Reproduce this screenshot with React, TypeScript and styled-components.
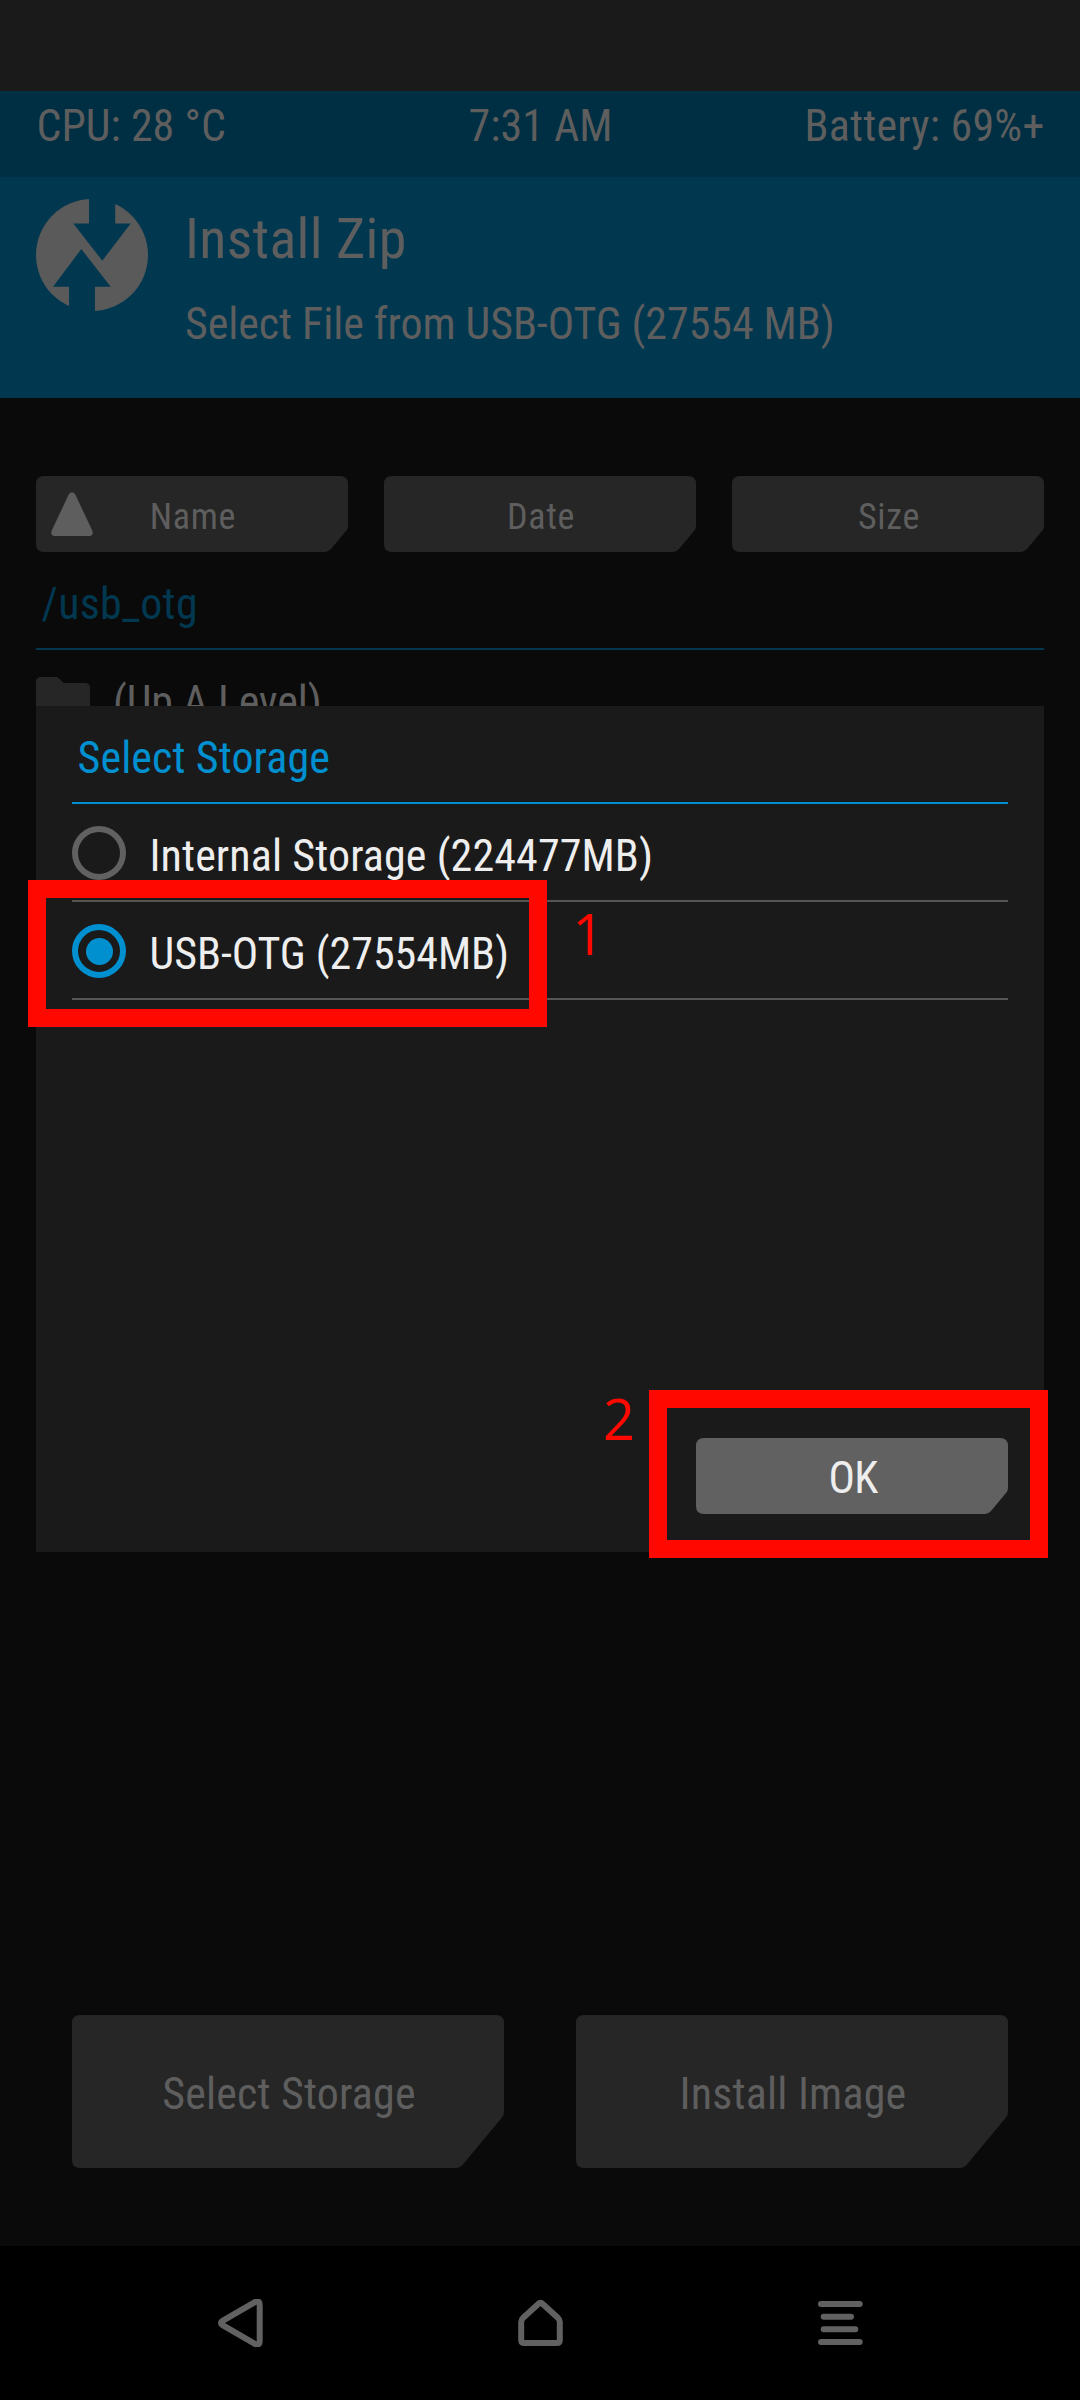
import React from "react";
import styled, { createGlobalStyle } from "styled-components";

const color = {
  screen: "#0a0a0a",
  notch: "#1a1a1a",
  status: "#002e42",
  header: "#013850",
  muted: "#5e5e5e",
  button: "#262626",
  dialog: "#1a1a1a",
  dialogButton: "#616161",
  accent: "#0090d0",
  accentDim: "#013850",
  text: "#eeeeee",
  mark: "#ff0800",
};

const GlobalStyle = createGlobalStyle`
  * { box-sizing: border-box; }
  body { margin: 0; background: ${color.screen}; }
`;

const Screen = styled.div`
  position: relative;
  display: flex;
  flex-direction: column;
  width: 1080px;
  height: 2400px;
  overflow: hidden;
  background: ${color.screen};
  color: ${color.muted};
  font-family: "Roboto Condensed", Roboto, sans-serif;
  font-stretch: 75%;
  font-size: 44px;
  line-height: 60px;
  white-space: nowrap;
`;

const Text = styled.span<{ $track?: number }>`
  letter-spacing: ${(p) => p.$track ?? 0}px;
`;

const Notch = styled.div`
  height: 91px;
  background: ${color.notch};
`;

const StatusBar = styled.div`
  display: grid;
  grid-template-columns: 1fr auto 1fr;
  height: 86px;
  padding: 5px 35.5px 0 36.5px;
  background: ${color.status};

  > :last-child {
    justify-self: end;
  }
`;

const Header = styled.header`
  display: flex;
  gap: 37px;
  height: 221px;
  padding: 22px 36px 0;
  background: ${color.header};
`;

const Logo = styled.svg`
  width: 112px;
  height: 112px;
`;

const HeaderText = styled.div`
  display: flex;
  flex-direction: column;
  gap: 25px;
  padding-top: 10px;
`;

const PageTitle = styled.div`
  font-size: 56px;
  letter-spacing: 0.3px;
`;

const Browser = styled.main`
  display: flex;
  flex-direction: column;
  flex: 1;
  padding: 78px 36px 0;
`;

const SortBar = styled.div`
  display: grid;
  grid-template-columns: repeat(3, 312px);
  gap: 36px;
`;

const SmallButton = styled.button<{ $tone?: string; $ink?: string; $size?: number; $drop?: number }>`
  position: relative;
  display: flex;
  align-items: center;
  justify-content: center;
  width: 312px;
  height: 76px;
  padding: ${(p) => p.$drop ?? 5}px 0 0 2px;
  border: 0;
  background: ${(p) => p.$tone ?? color.button};
  color: ${(p) => p.$ink ?? color.muted};
  font: inherit;
  font-size: ${(p) => p.$size ?? 36}px;
  clip-path: path("M8 0H304Q312 0 312 8V50Q312 52.5 310 55L295 73Q292.5 76 289 76H8Q0 76 0 68V8Q0 0 8 0Z");
`;

const SortArrow = styled.svg`
  position: absolute;
  left: 15px;
  top: 16px;
  width: 42px;
  height: 44px;
`;

const PathBar = styled.div`
  height: 98px;
  padding: 22px 0 0 5.5px;
  border-bottom: 2px solid ${color.accentDim};
  color: ${color.accentDim};
`;

const FileRow = styled.div`
  display: flex;
  gap: 23px;
  height: 98px;
  padding-top: 22px;
`;

const FolderIcon = styled.svg`
  width: 54px;
  height: 44px;
  margin-top: 5px;
`;

const Actions = styled.div`
  display: flex;
  justify-content: center;
  gap: 72px;
  margin: auto 0 78px;
`;

const ActionButton = styled.button`
  width: 432px;
  height: 153px;
  padding: 5px 0 0 2px;
  border: 0;
  background: ${color.button};
  color: ${color.muted};
  font: inherit;
  clip-path: path("M8 0H424Q432 0 432 8V97Q432 100 430 102.500L390.500 150Q388 153 384.500 153H8Q0 153 0 145V8Q0 0 8 0Z");
`;

const NavBar = styled.nav`
  display: flex;
  gap: 255px;
  height: 154px;
  padding: 53px 0 0 218px;
  background: #000;
`;

const NavIcon = styled.svg`
  width: 45px;
  height: 48px;
  fill: none;
  stroke: #616161;
  stroke-width: 6;
`;

const Dialog = styled.section`
  position: absolute;
  left: 36px;
  top: 706px;
  display: flex;
  flex-direction: column;
  width: 1008px;
  height: 846px;
  padding: 0 36px 38px;
  background: ${color.dialog};
  color: ${color.text};
`;

const DialogTitle = styled.div`
  height: 98px;
  padding: 22px 0 0 5.5px;
  border-bottom: 2px solid ${color.accent};
  color: ${color.accent};
`;

const Option = styled.div`
  display: flex;
  gap: 23.5px;
  height: 98px;
  padding-top: 22px;
  border-bottom: 2px solid #555;
`;

const Radio = styled.span<{ $on?: boolean }>`
  display: grid;
  place-items: center;
  width: 54px;
  height: 54px;
  border: 6px solid ${(p) => (p.$on ? color.accent : "#616161")};
  border-radius: 50%;

  &::after {
    content: "";
    width: 27px;
    height: 27px;
    border-radius: 50%;
    background: ${(p) => (p.$on ? color.accent : "transparent")};
  }
`;

const DialogFooter = styled.div`
  display: flex;
  justify-content: flex-end;
  margin-top: auto;
`;

const Highlight = styled.div<{ $x: number; $y: number; $w: number; $h: number }>`
  position: absolute;
  left: ${(p) => p.$x}px;
  top: ${(p) => p.$y}px;
  width: ${(p) => p.$w}px;
  height: ${(p) => p.$h}px;
  border: 18px solid ${color.mark};
`;

const StepNumber = styled.div<{ $x: number; $y: number }>`
  position: absolute;
  left: ${(p) => p.$x}px;
  top: ${(p) => p.$y}px;
  color: ${color.mark};
  font-family: "Open Sans", "Noto Sans", sans-serif;
  font-stretch: 100%;
  font-size: 56px;
`;

export default function App() {
  return (
    <Screen>
      <GlobalStyle />
      <Notch />
      <StatusBar>
        <Text>CPU: 28 °C</Text>
        <Text>7:31 AM</Text>
        <Text $track={0.2}>Battery: 69%+</Text>
      </StatusBar>
      <Header>
        <Logo viewBox="0 0 112 112">
          <circle cx="56" cy="56" r="56" fill="#5a5a5a" />
          <path d="M53 -2V24.500H37.300L66.300 61.700L94.700 24.500H79.200V-2Z" fill={color.header} />
          <path d="M45.300 50L74.700 87.700H59V114H33V87.700H17Z" fill={color.header} />
        </Logo>
        <HeaderText>
          <PageTitle>Install Zip</PageTitle>
          <Text $track={-0.08}>Select File from USB-OTG (27554 MB)</Text>
        </HeaderText>
      </Header>

      <Browser>
        <SortBar>
          <SmallButton>
            <SortArrow viewBox="0 0 42 44">
              <path d="M18 2Q21-1.500 24 2L41.500 39Q42.500 43.500 38.500 44H3.500Q-.5 43.500.5 39Z" fill={color.muted} />
            </SortArrow>
            <Text $track={0.7}>Name</Text>
          </SmallButton>
          <SmallButton>
            <Text $track={0.7}>Date</Text>
          </SmallButton>
          <SmallButton>
            <Text $track={0.7}>Size</Text>
          </SmallButton>
        </SortBar>
        <PathBar>
          <Text $track={0.3}>/usb_otg</Text>
        </PathBar>
        <FileRow>
          <FolderIcon viewBox="0 0 54 44">
            <path d="M5 0H20Q22 0 23.500 2L27.500 6H49Q54 6 54 11V39Q54 44 49 44H5Q0 44 0 39V5Q0 0 5 0Z" fill={color.button} />
          </FolderIcon>
          <Text $track={-0.15}>(Up A Level)</Text>
        </FileRow>
        <Actions>
          <ActionButton>
            <Text $track={0.18}>Select Storage</Text>
          </ActionButton>
          <ActionButton>
            <Text $track={0.2}>Install Image</Text>
          </ActionButton>
        </Actions>
      </Browser>

      <NavBar>
        <NavIcon viewBox="0 0 45 48">
          <path d="M41.700 6.500V41.500Q41.700 47.700 36.500 44.700L5 26.300Q1.060 24 5 21.700L36.500 3.300Q41.700.3 41.700 6.500Z" />
        </NavIcon>
        <NavIcon viewBox="0 -1 45 48">
          <path d="M3.200 22V40Q3.200 43 6.200 43H38.800Q41.800 43 41.800 40V22Q41.800 19.500 39.800 17.700L25 4.200Q22.500 1.800 20 4.200L5.200 17.700Q3.200 19.500 3.200 22Z" />
        </NavIcon>
        <NavIcon viewBox="0 -2 45 48" strokeLinecap="round">
          <path d="M3 3H41.700M5.700 15.700H33M5.700 28.300H37.300M3 41H41.700" />
        </NavIcon>
      </NavBar>

      <Dialog>
        <DialogTitle>
          <Text $track={0.1}>Select Storage</Text>
        </DialogTitle>
        <Option>
          <Radio />
          <Text $track={0.1}>Internal Storage (224477MB)</Text>
        </Option>
        <Option>
          <Radio $on />
          <Text $track={-0.05}>USB-OTG (27554MB)</Text>
        </Option>
        <DialogFooter>
          <SmallButton $tone={color.dialogButton} $ink={color.text} $size={44} $drop={3}>
            <Text $track={-0.8}>OK</Text>
          </SmallButton>
        </DialogFooter>
      </Dialog>

      <Highlight $x={28} $y={880} $w={519} $h={147} />
      <StepNumber $x={572.5} $y={903}>1</StepNumber>
      <Highlight $x={649} $y={1390} $w={399} $h={168} />
      <StepNumber $x={603} $y={1388}>2</StepNumber>
    </Screen>
  );
}
